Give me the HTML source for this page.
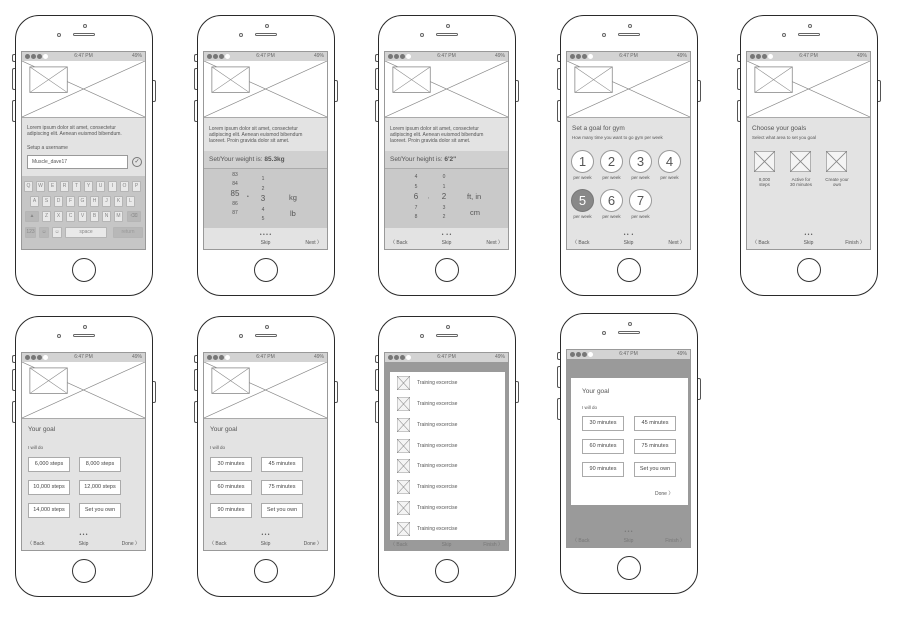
<!DOCTYPE html>
<html><head><meta charset="utf-8"><style>
*{box-sizing:border-box;margin:0;padding:0}
body{width:900px;height:619px;background:#fff;position:relative;overflow:hidden;font-family:"Liberation Sans",sans-serif;color:#555}
.ph{position:absolute;width:138px;height:281px;border:1.5px solid #2a2a2a;border-radius:24px;background:#fff}
.ph .sb{position:absolute;left:-4px;width:3px;border:1px solid #555;border-right:none;border-radius:2px 0 0 2px;background:#fff}
.ph .rb{position:absolute;right:-4px;top:64px;width:3px;height:22px;border:1px solid #555;border-left:none;border-radius:0 2px 2px 0}
.cam{position:absolute;left:67px;top:8px;width:4px;height:4px;border:1px solid #666;border-radius:50%}
.sp{position:absolute;left:57px;top:17px;width:22px;height:3px;border:1px solid #666;border-radius:2px}
.cm2{position:absolute;left:41px;top:17px;width:4px;height:4px;border:1px solid #666;border-radius:50%}
.hb{position:absolute;left:56px;top:242px;width:24px;height:24px;border:1px solid #333;border-radius:50%}
.sc{position:absolute;left:5px;top:35px;width:125px;height:199px;border:1px solid #999;overflow:hidden;background:#e3e3e3}
.st{position:absolute;left:0;top:0;width:100%;height:9px;background:#d3d3d3;font-size:5px;line-height:9px;color:#666}
.st .d{position:absolute;left:3px;top:2px;width:5px;height:5px;border-radius:50%;background:#777}
.st .w{position:absolute;left:21px;top:2px;width:5px;height:5px;border-radius:50%;background:#fff}
.st .t{position:absolute;left:0;width:100%;text-align:center}
.st .r{position:absolute;right:3px}
.img{position:absolute;left:0;top:9px;width:100%;height:57px;background:#fff;border-bottom:1px solid #aaa}
.a{position:absolute;white-space:nowrap}
.s5{font-size:5px;line-height:6px}
.s6{font-size:6.5px}
.s7{font-size:7.5px}
.btn{position:absolute;width:42px;height:15px;background:#fff;border:1px solid #aaa;font-size:5.5px;line-height:13px;text-align:center;color:#444}
.cir{position:absolute;width:23px;height:23px;border:1px solid #999;border-radius:50%;background:#fff;font-size:13px;line-height:21px;text-align:center;color:#555}
.pw{position:absolute;font-size:4.5px;width:29px;text-align:center}
.nav{position:absolute;left:0;width:100%;font-size:5px}
.key{position:absolute;width:9px;height:11px;background:#e9e9e9;border:1px solid #b5b5b5;border-radius:1px;font-size:5px;line-height:9px;text-align:center;color:#888}
.ov{position:absolute;left:0;top:9px;width:100%;height:190px;background:#9a9a9a}
.md{position:absolute;background:#fff}
</style></head><body>

<svg width="0" height="0" style="position:absolute"><defs>
<symbol id="im" viewBox="0 0 125 57" preserveAspectRatio="none"><line x1="0" y1="0" x2="125" y2="57" stroke="#888" stroke-width="0.7"/><line x1="125" y1="0" x2="0" y2="57" stroke="#888" stroke-width="0.7"/><rect x="8" y="6" width="38" height="26" fill="#fff" stroke="#888" stroke-width="0.8"/><line x1="8" y1="6" x2="46" y2="32" stroke="#888" stroke-width="0.6"/><line x1="46" y1="6" x2="8" y2="32" stroke="#888" stroke-width="0.6"/></symbol>
<symbol id="bx" viewBox="0 0 10 10" preserveAspectRatio="none"><rect x="0" y="0" width="10" height="10" fill="#f4f4f4" stroke="#888" stroke-width="0.6"/><line x1="0" y1="0" x2="10" y2="10" stroke="#888" stroke-width="0.4"/><line x1="10" y1="0" x2="0" y2="10" stroke="#888" stroke-width="0.4"/></symbol>
</defs></svg>

<!-- ROW 1 PHONE 1 -->
<div class="ph" style="left:15px;top:15px">
<div class="sb" style="top:38px;height:8px"></div><div class="sb" style="top:52px;height:22px"></div><div class="sb" style="top:84px;height:22px"></div><div class="rb"></div>
<div class="cam"></div><div class="cm2"></div><div class="sp"></div><div class="hb"></div>
<div class="sc">
<div class="st"><span class="d"></span><span class="d" style="left:9px"></span><span class="d" style="left:15px"></span><span class="w"></span><span class="t">6:47 PM</span><span class="r">49%</span></div>
<svg class="img" viewBox="0 0 125 57" preserveAspectRatio="none"><use href="#im"/></svg>
<div class="a s5" style="left:5px;top:73px">Lorem ipsum dolor sit amet, consectetur<br>adipiscing elit. Aenean euismod bibendum.</div>
<div class="a s5" style="left:5px;top:93px">Setup a username</div>
<div class="a" style="left:5px;top:103px;width:101px;height:14px;background:#fff;border:1px solid #999;font-size:5px;line-height:12px;padding-left:4px">Muscle_dave17</div>
<div class="a" style="left:110px;top:105px;width:10px;height:10px;border:1px solid #777;border-radius:50%;font-size:6px;line-height:8px;text-align:center">✓</div>
<div class="a" style="left:0;top:124px;width:125px;height:75px;background:#c6c6c6"></div>
<div class="key" style="left:2px;top:129px">Q</div><div class="key" style="left:14px;top:129px">W</div><div class="key" style="left:26px;top:129px">E</div><div class="key" style="left:38px;top:129px">R</div><div class="key" style="left:50px;top:129px">T</div><div class="key" style="left:62px;top:129px">Y</div><div class="key" style="left:74px;top:129px">U</div><div class="key" style="left:86px;top:129px">I</div><div class="key" style="left:98px;top:129px">O</div><div class="key" style="left:110px;top:129px">P</div>
<div class="key" style="left:8px;top:144px">A</div><div class="key" style="left:20px;top:144px">S</div><div class="key" style="left:32px;top:144px">D</div><div class="key" style="left:44px;top:144px">F</div><div class="key" style="left:56px;top:144px">G</div><div class="key" style="left:68px;top:144px">H</div><div class="key" style="left:80px;top:144px">J</div><div class="key" style="left:92px;top:144px">K</div><div class="key" style="left:104px;top:144px">L</div>
<div class="key" style="left:3px;top:159px;width:14px;background:#b8b8b8">▲</div><div class="key" style="left:20px;top:159px">Z</div><div class="key" style="left:32px;top:159px">X</div><div class="key" style="left:44px;top:159px">C</div><div class="key" style="left:56px;top:159px">V</div><div class="key" style="left:68px;top:159px">B</div><div class="key" style="left:80px;top:159px">N</div><div class="key" style="left:92px;top:159px">M</div><div class="key" style="left:105px;top:159px;width:14px;background:#b8b8b8">⌫</div>
<div class="key" style="left:3px;top:175px;width:11px;background:#b8b8b8">123</div><div class="key" style="left:17px;top:175px;width:10px;background:#b8b8b8">☺</div><div class="key" style="left:30px;top:175px;width:10px">☺</div><div class="key" style="left:43px;top:175px;width:42px">space</div><div class="key" style="left:91px;top:175px;width:30px;background:#b8b8b8;color:#999">return</div>
</div></div>

<!-- ROW 1 PHONE 2 -->
<div class="ph" style="left:197px;top:15px">
<div class="sb" style="top:38px;height:8px"></div><div class="sb" style="top:52px;height:22px"></div><div class="sb" style="top:84px;height:22px"></div><div class="rb"></div>
<div class="cam"></div><div class="cm2"></div><div class="sp"></div><div class="hb"></div>
<div class="sc">
<div class="st"><span class="d"></span><span class="d" style="left:9px"></span><span class="d" style="left:15px"></span><span class="w"></span><span class="t">6:47 PM</span><span class="r">49%</span></div>
<svg class="img" viewBox="0 0 125 57" preserveAspectRatio="none"><use href="#im"/></svg>
<div class="a s5" style="left:5px;top:74px">Lorem ipsum dolor sit amet, consectetur<br>adipiscing elit. Aenean euismod bibendum<br>laoreet. Proin gravida dolor sit amet.</div>
<div class="a" style="left:0;top:99px;width:125px;height:17px;background:#d0d0d0;font-size:6.5px;line-height:17px;padding-left:5px">Set/Your weight is: <b>85.3kg</b></div>
<div class="a" style="left:0;top:116px;width:125px;height:60px;background:#c9c9c9;border-top:1px solid #aaa"></div>
<div class="a s5" style="left:25px;top:119px;text-align:center;width:12px;line-height:9px">83<br>84<br><span style="font-size:8px">85</span><br>86<br>87</div>
<div class="a s5" style="left:43px;top:142px">•</div>
<div class="a s5" style="left:54px;top:123px;text-align:center;width:10px;line-height:9.5px">1<br>2<br><span style="font-size:8px">3</span><br>4<br>5</div>
<div class="a s7" style="left:85px;top:141px">kg</div><div class="a s7" style="left:86px;top:157px">lb</div>
<div class="nav" style="top:180px;text-align:center">• • • •</div>
<div class="nav" style="top:188px;text-align:center">Skip</div>
<div class="a s5" style="right:5px;top:188px">Next 〉</div>
</div></div>

<!-- ROW 1 PHONE 3 -->
<div class="ph" style="left:378px;top:15px">
<div class="sb" style="top:38px;height:8px"></div><div class="sb" style="top:52px;height:22px"></div><div class="sb" style="top:84px;height:22px"></div><div class="rb"></div>
<div class="cam"></div><div class="cm2"></div><div class="sp"></div><div class="hb"></div>
<div class="sc">
<div class="st"><span class="d"></span><span class="d" style="left:9px"></span><span class="d" style="left:15px"></span><span class="w"></span><span class="t">6:47 PM</span><span class="r">49%</span></div>
<svg class="img" viewBox="0 0 125 57" preserveAspectRatio="none"><use href="#im"/></svg>
<div class="a s5" style="left:5px;top:74px">Lorem ipsum dolor sit amet, consectetur<br>adipiscing elit. Aenean euismod bibendum<br>laoreet. Proin gravida dolor sit amet.</div>
<div class="a" style="left:0;top:99px;width:125px;height:17px;background:#d0d0d0;font-size:6.5px;line-height:17px;padding-left:5px">Set/Your height is: <b>6'2"</b></div>
<div class="a" style="left:0;top:116px;width:125px;height:60px;background:#c9c9c9;border-top:1px solid #aaa"></div>
<div class="a s5" style="left:25px;top:121px;text-align:center;width:12px;line-height:9.5px">4<br>5<br><span style="font-size:8px">6</span><br>7<br>8</div>
<div class="a s5" style="left:43px;top:142px">,</div>
<div class="a s5" style="left:54px;top:121px;text-align:center;width:10px;line-height:9.5px">0<br>1<br><span style="font-size:8px">2</span><br>3<br>2</div>
<div class="a s7" style="left:82px;top:140px">ft, in</div><div class="a s7" style="left:85px;top:156px">cm</div>
<div class="nav" style="top:180px;text-align:center">• &nbsp;• •</div>
<div class="a s5" style="left:5px;top:188px">〈 Back</div>
<div class="nav" style="top:188px;text-align:center">Skip</div>
<div class="a s5" style="right:5px;top:188px">Next 〉</div>
</div></div>

<!-- ROW 1 PHONE 4 -->
<div class="ph" style="left:560px;top:15px">
<div class="sb" style="top:38px;height:8px"></div><div class="sb" style="top:52px;height:22px"></div><div class="sb" style="top:84px;height:22px"></div><div class="rb"></div>
<div class="cam"></div><div class="cm2"></div><div class="sp"></div><div class="hb"></div>
<div class="sc">
<div class="st"><span class="d"></span><span class="d" style="left:9px"></span><span class="d" style="left:15px"></span><span class="w"></span><span class="t">6:47 PM</span><span class="r">49%</span></div>
<svg class="img" viewBox="0 0 125 57" preserveAspectRatio="none"><use href="#im"/></svg>
<div class="a s6" style="left:5px;top:73px">Set a goal for gym</div>
<div class="a" style="left:5px;top:83px;font-size:4.5px">How many time you want to go gym per week</div>
<div class="cir" style="left:4px;top:98px">1</div><div class="cir" style="left:33px;top:98px">2</div><div class="cir" style="left:62px;top:98px">3</div><div class="cir" style="left:91px;top:98px">4</div>
<div class="pw" style="left:1px;top:123px">per week</div><div class="pw" style="left:30px;top:123px">per week</div><div class="pw" style="left:59px;top:123px">per week</div><div class="pw" style="left:88px;top:123px">per week</div>
<div class="cir" style="left:4px;top:137px;background:#888;color:#fff;border-color:#777">5</div><div class="cir" style="left:33px;top:137px">6</div><div class="cir" style="left:62px;top:137px">7</div>
<div class="pw" style="left:1px;top:162px">per week</div><div class="pw" style="left:30px;top:162px">per week</div><div class="pw" style="left:59px;top:162px">per week</div>
<div class="nav" style="top:180px;text-align:center">• • &nbsp;•</div>
<div class="a s5" style="left:5px;top:188px">〈 Back</div>
<div class="nav" style="top:188px;text-align:center">Skip</div>
<div class="a s5" style="right:5px;top:188px">Next 〉</div>
</div></div>

<!-- ROW 1 PHONE 5 -->
<div class="ph" style="left:740px;top:15px">
<div class="sb" style="top:38px;height:8px"></div><div class="sb" style="top:52px;height:22px"></div><div class="sb" style="top:84px;height:22px"></div><div class="rb"></div>
<div class="cam"></div><div class="cm2"></div><div class="sp"></div><div class="hb"></div>
<div class="sc">
<div class="st"><span class="d"></span><span class="d" style="left:9px"></span><span class="d" style="left:15px"></span><span class="w"></span><span class="t">6:47 PM</span><span class="r">49%</span></div>
<svg class="img" viewBox="0 0 125 57" preserveAspectRatio="none"><use href="#im"/></svg>
<div class="a s6" style="left:5px;top:73px">Choose your goals</div>
<div class="a" style="left:5px;top:83px;font-size:4.5px">Select what area to set you goal</div>
<svg class="a" style="left:7px;top:99px" width="21" height="21"><use href="#bx"/></svg>
<svg class="a" style="left:43px;top:99px" width="21" height="21"><use href="#bx"/></svg>
<svg class="a" style="left:79px;top:99px" width="21" height="21"><use href="#bx"/></svg>
<div class="pw" style="left:3px;top:125px;line-height:5px">8,000<br>steps</div>
<div class="pw" style="left:33px;top:125px;width:42px;line-height:5px">Active for<br>30 minutes</div>
<div class="pw" style="left:70px;top:125px;width:40px;line-height:5px">Create your<br>own</div>
<div class="nav" style="top:180px;text-align:center">• • • </div>
<div class="a s5" style="left:5px;top:188px">〈 Back</div>
<div class="nav" style="top:188px;text-align:center">Skip</div>
<div class="a s5" style="right:5px;top:188px">Finish 〉</div>
</div></div>

<!-- ROW 2 PHONE 1 -->
<div class="ph" style="left:15px;top:316px">
<div class="sb" style="top:38px;height:8px"></div><div class="sb" style="top:52px;height:22px"></div><div class="sb" style="top:84px;height:22px"></div><div class="rb"></div>
<div class="cam"></div><div class="cm2"></div><div class="sp"></div><div class="hb"></div>
<div class="sc">
<div class="st"><span class="d"></span><span class="d" style="left:9px"></span><span class="d" style="left:15px"></span><span class="w"></span><span class="t">6:47 PM</span><span class="r">49%</span></div>
<svg class="img" viewBox="0 0 125 57" preserveAspectRatio="none"><use href="#im"/></svg>
<div class="a s6" style="left:6px;top:73px">Your goal</div>
<div class="a" style="left:6px;top:92px;font-size:4.5px">I will do</div>
<div class="btn" style="left:6px;top:104px">6,000 steps</div><div class="btn" style="left:57px;top:104px">8,000 steps</div>
<div class="btn" style="left:6px;top:127px">10,000 steps</div><div class="btn" style="left:57px;top:127px">12,000 steps</div>
<div class="btn" style="left:6px;top:150px">14,000 steps</div><div class="btn" style="left:57px;top:150px">Set you own</div>
<div class="nav" style="top:179px;text-align:center">• • • </div>
<div class="a s5" style="left:5px;top:188px">〈 Back</div>
<div class="nav" style="top:188px;text-align:center">Skip</div>
<div class="a s5" style="right:5px;top:188px">Done 〉</div>
</div></div>

<!-- ROW 2 PHONE 2 -->
<div class="ph" style="left:197px;top:316px">
<div class="sb" style="top:38px;height:8px"></div><div class="sb" style="top:52px;height:22px"></div><div class="sb" style="top:84px;height:22px"></div><div class="rb"></div>
<div class="cam"></div><div class="cm2"></div><div class="sp"></div><div class="hb"></div>
<div class="sc">
<div class="st"><span class="d"></span><span class="d" style="left:9px"></span><span class="d" style="left:15px"></span><span class="w"></span><span class="t">6:47 PM</span><span class="r">49%</span></div>
<svg class="img" viewBox="0 0 125 57" preserveAspectRatio="none"><use href="#im"/></svg>
<div class="a s6" style="left:6px;top:73px">Your goal</div>
<div class="a" style="left:6px;top:92px;font-size:4.5px">I will do</div>
<div class="btn" style="left:6px;top:104px">30 minutes</div><div class="btn" style="left:57px;top:104px">45 minutes</div>
<div class="btn" style="left:6px;top:127px">60 minutes</div><div class="btn" style="left:57px;top:127px">75 minutes</div>
<div class="btn" style="left:6px;top:150px">90 minutes</div><div class="btn" style="left:57px;top:150px">Set you own</div>
<div class="nav" style="top:179px;text-align:center">• • • </div>
<div class="a s5" style="left:5px;top:188px">〈 Back</div>
<div class="nav" style="top:188px;text-align:center">Skip</div>
<div class="a s5" style="right:5px;top:188px">Done 〉</div>
</div></div>

<!-- ROW 2 PHONE 3 -->
<div class="ph" style="left:378px;top:316px">
<div class="sb" style="top:38px;height:8px"></div><div class="sb" style="top:52px;height:22px"></div><div class="sb" style="top:84px;height:22px"></div><div class="rb"></div>
<div class="cam"></div><div class="cm2"></div><div class="sp"></div><div class="hb"></div>
<div class="sc">
<div class="st"><span class="d"></span><span class="d" style="left:9px"></span><span class="d" style="left:15px"></span><span class="w"></span><span class="t">6:47 PM</span><span class="r">49%</span></div>
<div class="ov"></div>
<div class="a s5" style="left:5px;top:189px;color:#777">〈 Back</div>
<div class="nav" style="top:189px;text-align:center;color:#777">Skip</div>
<div class="a s5" style="right:5px;top:189px;color:#777">Finish 〉</div>
<div class="md" style="left:5px;top:19px;width:115px;height:168px"></div>
<svg class="a" style="left:12px;top:23px" width="13" height="14"><use href="#bx"/></svg><div class="a s5" style="left:32px;top:27px">Training excercise</div>
<svg class="a" style="left:12px;top:44px" width="13" height="14"><use href="#bx"/></svg><div class="a s5" style="left:32px;top:48px">Training excercise</div>
<svg class="a" style="left:12px;top:65px" width="13" height="14"><use href="#bx"/></svg><div class="a s5" style="left:32px;top:69px">Training excercise</div>
<svg class="a" style="left:12px;top:86px" width="13" height="14"><use href="#bx"/></svg><div class="a s5" style="left:32px;top:90px">Training excercise</div>
<svg class="a" style="left:12px;top:106px" width="13" height="14"><use href="#bx"/></svg><div class="a s5" style="left:32px;top:110px">Training excercise</div>
<svg class="a" style="left:12px;top:127px" width="13" height="14"><use href="#bx"/></svg><div class="a s5" style="left:32px;top:131px">Training excercise</div>
<svg class="a" style="left:12px;top:148px" width="13" height="14"><use href="#bx"/></svg><div class="a s5" style="left:32px;top:152px">Training excercise</div>
<svg class="a" style="left:12px;top:169px" width="13" height="14"><use href="#bx"/></svg><div class="a s5" style="left:32px;top:173px">Training excercise</div>
</div></div>

<!-- ROW 2 PHONE 4 -->
<div class="ph" style="left:560px;top:313px">
<div class="sb" style="top:38px;height:8px"></div><div class="sb" style="top:52px;height:22px"></div><div class="sb" style="top:84px;height:22px"></div><div class="rb"></div>
<div class="cam"></div><div class="cm2"></div><div class="sp"></div><div class="hb"></div>
<div class="sc">
<div class="st"><span class="d"></span><span class="d" style="left:9px"></span><span class="d" style="left:15px"></span><span class="w"></span><span class="t">6:47 PM</span><span class="r">49%</span></div>
<div class="ov"></div>
<div class="nav" style="top:179px;text-align:center;color:#777">• • • </div>
<div class="a s5" style="left:5px;top:188px;color:#777">〈 Back</div>
<div class="nav" style="top:188px;text-align:center;color:#777">Skip</div>
<div class="a s5" style="right:5px;top:188px;color:#777">Finish 〉</div>
<div class="md" style="left:4px;top:28px;width:117px;height:127px"></div>
<div class="a s6" style="left:15px;top:38px">Your goal</div>
<div class="a" style="left:15px;top:55px;font-size:4.5px">I will do</div>
<div class="btn" style="left:15px;top:66px">30 minutes</div><div class="btn" style="left:67px;top:66px">45 minutes</div>
<div class="btn" style="left:15px;top:89px">60 minutes</div><div class="btn" style="left:67px;top:89px">75 minutes</div>
<div class="btn" style="left:15px;top:112px">90 minutes</div><div class="btn" style="left:67px;top:112px">Set you own</div>
<div class="a s5" style="left:88px;top:141px">Done 〉</div>
</div></div>

</body></html>
